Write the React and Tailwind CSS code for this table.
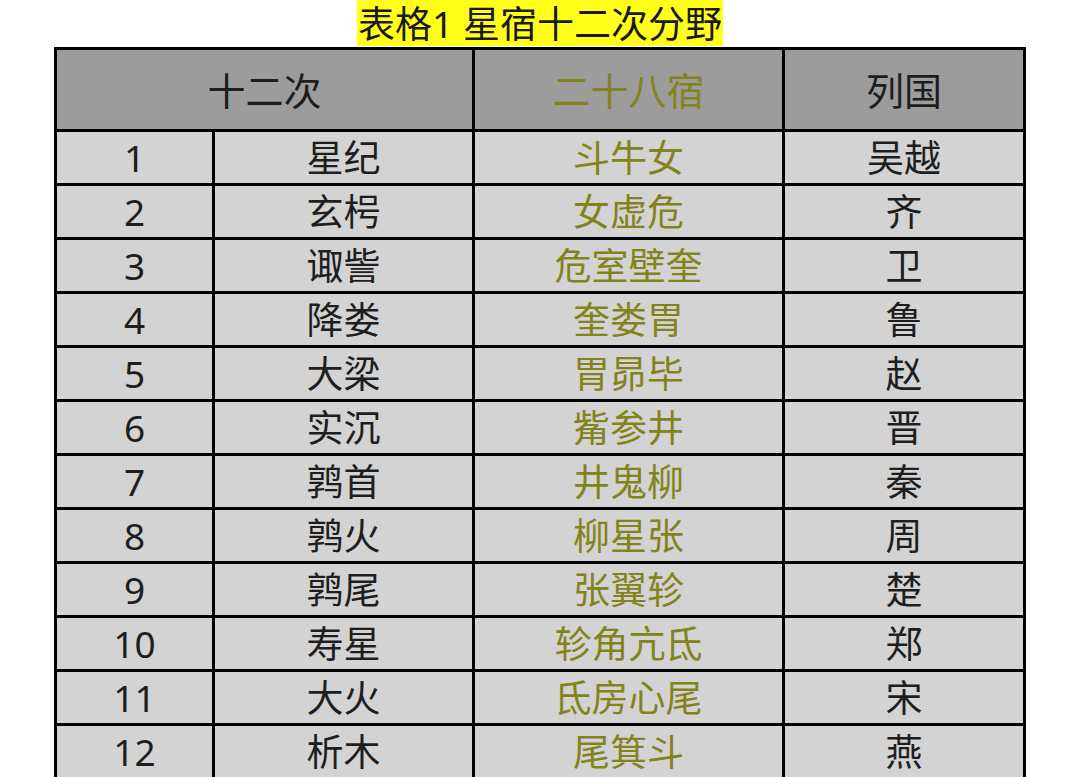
import React from 'react';

const rows = [
  ['1', '星纪', '斗牛女', '吴越'],
  ['2', '玄枵', '女虚危', '齐'],
  ['3', '诹訾', '危室壁奎', '卫'],
  ['4', '降娄', '奎娄胃', '鲁'],
  ['5', '大梁', '胃昴毕', '赵'],
  ['6', '实沉', '觜参井', '晋'],
  ['7', '鹑首', '井鬼柳', '秦'],
  ['8', '鹑火', '柳星张', '周'],
  ['9', '鹑尾', '张翼轸', '楚'],
  ['10', '寿星', '轸角亢氐', '郑'],
  ['11', '大火', '氐房心尾', '宋'],
  ['12', '析木', '尾箕斗', '燕'],
];

const cell = 'border-[3px] border-black text-center p-0 leading-none';

const App = () => {
  return (
    <div
      className="w-[1080px] h-[777px] overflow-hidden bg-white"
      style={{ fontFamily: '"Noto Sans", "Noto Sans CJK SC", sans-serif' }}
    >
      <div className="flex justify-center h-[47px]">
        <div className="bg-[#ffff1a] h-[46px] px-[1px] flex items-center">
          <span className="text-[37px] text-[#1a1a1a] leading-none whitespace-nowrap">
            表格1 星宿十二次分野
          </span>
        </div>
      </div>
      <div className="pl-[54px]">
        <table className="table-fixed border-collapse w-[969px] text-[#1e1e1e]">
          <colgroup>
            <col className="w-[158px]" />
            <col className="w-[260px]" />
            <col className="w-[310px]" />
            <col className="w-[241px]" />
          </colgroup>
          <thead>
            <tr className="h-[82px] bg-[#9c9c9c] text-[38px]">
              <th colSpan={2} className={`${cell} font-normal`}>十二次</th>
              <th className={`${cell} font-normal text-[#83831c]`}>二十八宿</th>
              <th className={`${cell} font-normal`}>列国</th>
            </tr>
          </thead>
          <tbody>
            {rows.map((r) => (
              <tr key={r[0]} className="h-[54px] bg-[#d3d3d3] text-[37px]">
                <td className={cell}>{r[0]}</td>
                <td className={cell}>{r[1]}</td>
                <td className={`${cell} text-[#83831c]`}>{r[2]}</td>
                <td className={cell}>{r[3]}</td>
              </tr>
            ))}
          </tbody>
        </table>
      </div>
    </div>
  );
};

export default App;
